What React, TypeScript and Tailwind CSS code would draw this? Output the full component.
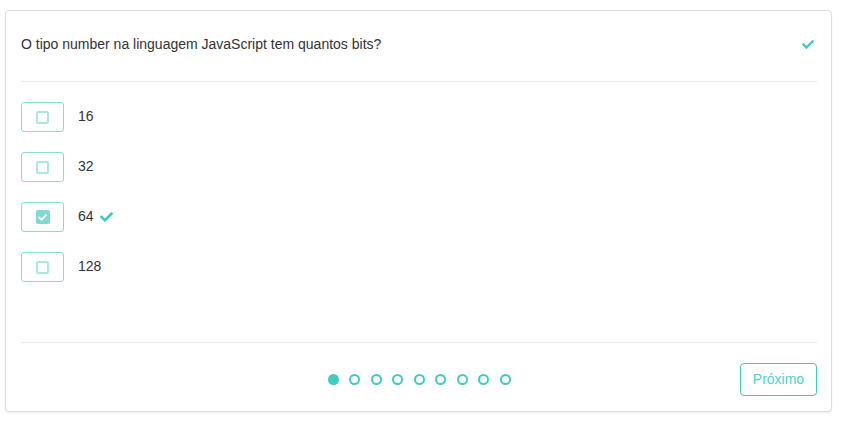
import React from "react";

const options = [
  { label: "16", checked: false },
  { label: "32", checked: false },
  { label: "64", checked: true },
  { label: "128", checked: false },
];

function Check({ className }: { className?: string }) {
  return (
    <svg viewBox="0 64 512 384" className={className} fill="currentColor">
      <path d="M173.898 439.404l-166.4-166.4c-9.997-9.997-9.997-26.206 0-36.204l36.203-36.204c9.997-9.998 26.207-9.998 36.204 0L192 312.69 432.095 72.596c9.997-9.997 26.207-9.997 36.204 0l36.203 36.204c9.997 9.997 9.997 26.206 0 36.204l-294.4 294.401c-9.998 9.997-26.207 9.997-36.204-.001z" />
    </svg>
  );
}

export default function App() {
  return (
    <div
      className="w-[842px] h-[423px] bg-white pt-[10px] pl-[5px]"
      style={{ fontFamily: '"Liberation Sans", Arial, sans-serif' }}
    >
      <div className="w-[827px] h-[402px] border border-[#dcdcdc] rounded-[4px] bg-white shadow-[0_1px_2px_rgba(0,0,0,0.08)] pl-[15px] pr-[14px] flex flex-col">
        {/* header */}
        <div className="flex items-center justify-between pt-[23px] pb-[27px] border-b border-[#ebebeb]">
          <p className="text-[14px] leading-[20px] text-[#333]">
            O tipo number na linguagem JavaScript tem quantos bits?
          </p>
          <Check className="w-[12px] h-[9px] text-[#3fcbbd] mr-[3px]" />
        </div>

        {/* options */}
        <div className="flex flex-col gap-[20px] pt-[20px] pb-[60px] border-b border-[#ebebeb]">
          {options.map((o) => (
            <div key={o.label} className="flex items-center h-[30px]">
              <div className="w-[43px] h-[30px] border border-[#86ddd4] rounded-[3px] flex items-center justify-center">
                {o.checked ? (
                  <div className="w-[14px] h-[14px] rounded-[2px] bg-[#7fdbd1] flex items-center justify-center">
                    <Check className="w-[9px] h-[7px] text-white" />
                  </div>
                ) : (
                  <div className="w-[13px] h-[13px] rounded-[2px] border-2 border-[#a8e8e1]" />
                )}
              </div>
              <span className="ml-[14px] -mt-[2px] text-[14px] leading-[20px] text-[#333]">{o.label}</span>
              {o.checked && <Check className="ml-[6px] -mt-[1px] w-[13px] h-[10px] text-[#3fcbbd]" />}
            </div>
          ))}
        </div>

        {/* footer */}
        <div className="grid grid-cols-[1fr_auto_1fr] items-center pt-[20px]">
          <div />
          <div className="flex items-center gap-[10.5px]">
            {Array.from({ length: 9 }).map((_, i) =>
              i === 0 ? (
                <span key={i} className="w-[11px] h-[11px] rounded-full bg-[#3fcbbd]" />
              ) : (
                <span key={i} className="w-[11px] h-[11px] rounded-full border-2 border-[#3fcbbd]" />
              )
            )}
          </div>
          <div className="flex justify-end">
            <button className="w-[77px] h-[33px] border border-[#3fcbbd] rounded-[4px] text-[14px] text-[#4fd1c5]">
              Próximo
            </button>
          </div>
        </div>
      </div>
    </div>
  );
}
